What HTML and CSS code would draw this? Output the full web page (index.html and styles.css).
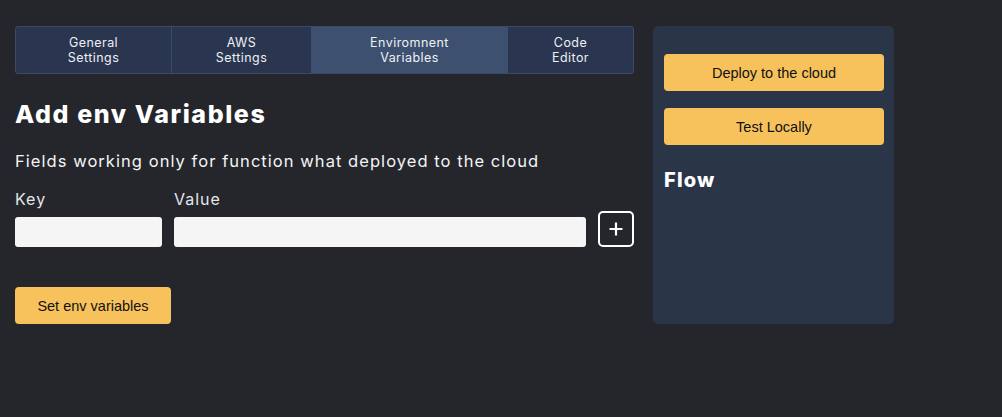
FILE: index.html
```html
<!DOCTYPE html>
<html>
<head>
<meta charset="utf-8">
<link rel="stylesheet" href="styles.css">
</head>
<body>
<div class="page">
  <main class="main">
    <nav class="tabs">
      <div class="tab t1">General<br>Settings</div>
      <div class="tab t2">AWS<br>Settings</div>
      <div class="tab t3 active">Enviromnent<br>Variables</div>
      <div class="tab t4">Code<br>Editor</div>
    </nav>
    <h1 class="title">Add env Variables</h1>
    <p class="note">Fields working only for function what deployed to the cloud</p>
    <div class="fields">
      <div class="field key">
        <label class="label">Key</label>
        <input class="input" type="text">
      </div>
      <div class="field value">
        <label class="label">Value</label>
        <input class="input" type="text">
      </div>
      <button class="plus" type="button">
        <svg width="16" height="16" viewBox="0 0 16 16"><path d="M8 1.5v13M1.5 8h13" stroke="#fff" stroke-width="2.2" fill="none"/></svg>
      </button>
    </div>
    <button class="btn set">Set env variables</button>
  </main>
  <aside class="panel">
    <button class="btn wide">Deploy to the cloud</button>
    <button class="btn wide">Test Locally</button>
    <h2 class="flow">Flow</h2>
  </aside>
</div>
</body>
</html>
```
FILE: styles.css
```css
* { box-sizing: border-box; }
html, body { margin: 0; height: 100%; }
body {
  background: #25262b;
  font-family: "Inter", "Open Sans", "DejaVu Sans", sans-serif;
  color: #fff;
}
.page {
  display: flex;
  align-items: flex-start;
  gap: 19px;
  padding: 26px 0 0 15px;
}
.main { width: 619px; }
.tabs {
  display: flex;
  height: 48px;
  border: 1px solid #3b4a66;
  border-radius: 3px;
  background: #2a3650;
  overflow: hidden;
}
.tab {
  display: flex;
  align-items: center;
  justify-content: center;
  text-align: center;
  font-size: 12.5px;
  line-height: 15px;
  letter-spacing: 0.45px;
  color: #eef0f4;
}
.t1 { width: 156px; border-right: 1px solid #3b4a66; }
.t2 { width: 139px; }
.t3 { width: 197px; }
.t4 { flex: 1; }
.tab.active { background: #3e506f; }
.title {
  margin: 24px 0 0;
  font-size: 25px;
  font-weight: 800;
  line-height: 32px;
  letter-spacing: 1.6px;
}
.note {
  margin: 20px 0 0;
  font-size: 16.5px;
  line-height: 22px;
  letter-spacing: 1.05px;
  color: #f4f4f6;
}
.fields {
  display: flex;
  align-items: flex-end;
  gap: 12px;
  margin-top: 17px;
}
.field { display: flex; flex-direction: column; }
.key { width: 147px; }
.value { width: 412px; }
.label {
  font-size: 16px;
  line-height: 20px;
  letter-spacing: 1px;
  color: #e4e6ea;
  margin-bottom: 8px;
}
.input {
  height: 30px;
  border: none;
  border-radius: 3px;
  background: #f5f5f5;
  outline: none;
}
.plus {
  width: 36px;
  height: 36px;
  border: 2px solid #fff;
  border-radius: 5px;
  background: transparent;
  display: flex;
  align-items: center;
  justify-content: center;
  padding: 0;
}
.btn {
  display: block;
  border: none;
  border-radius: 4px;
  background: #f7c25c;
  color: #111;
  font-family: "Liberation Sans", Arial, sans-serif;
  font-size: 14.5px;
  height: 37px;
  padding: 0;
}
.set { width: 156px; margin-top: 40px; }
.panel {
  width: 241px;
  height: 298px;
  background: #2b3548;
  border-radius: 5px;
  padding: 28px 10px 0 11px;
}
.wide { width: 100%; margin-bottom: 17px; }
.flow {
  margin: 25px 0 0;
  font-size: 20px;
  font-weight: 800;
  line-height: 20px;
  letter-spacing: 1.2px;
}
```
